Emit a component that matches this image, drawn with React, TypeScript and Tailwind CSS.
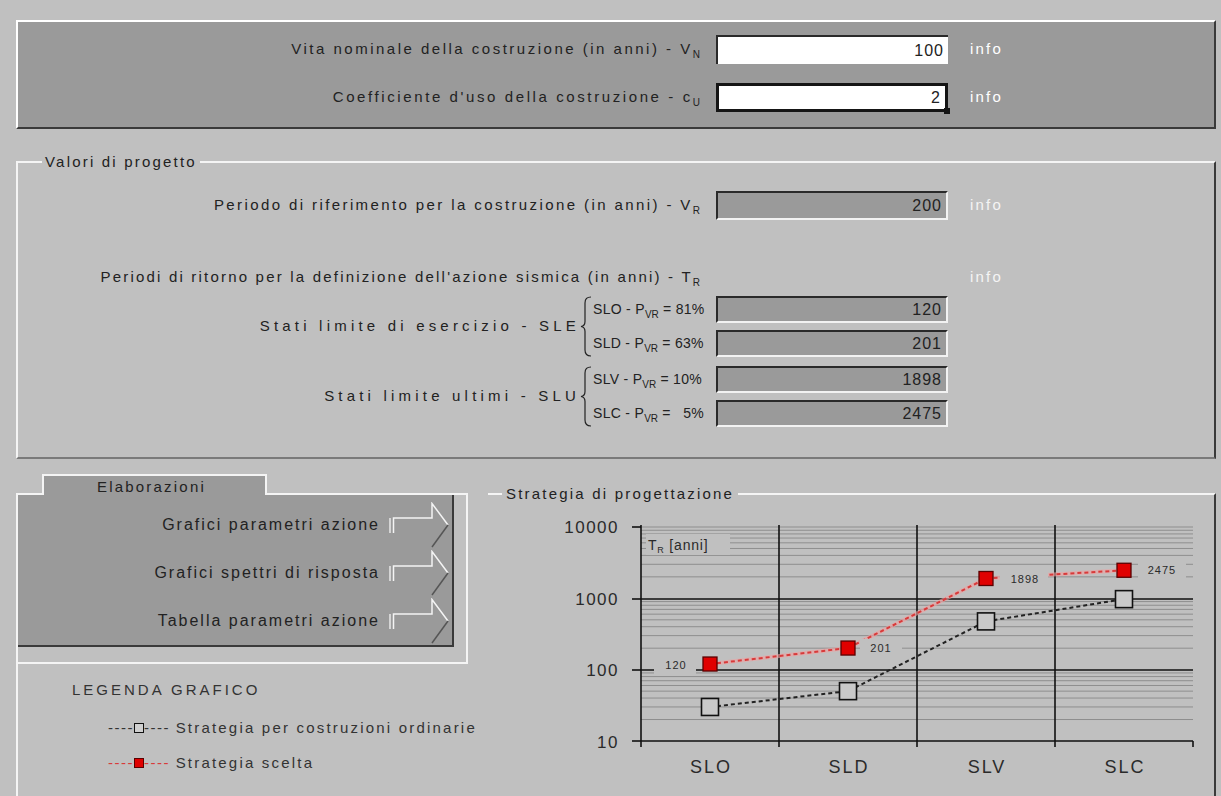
import React from 'react';

const SUNKEN = 'bg-[#9a9a9a] border-t-2 border-l-2 border-t-[#2a2a2a] border-l-[#2a2a2a] border-b-2 border-r-2 border-b-[#f2f2f2] border-r-[#f2f2f2]';

function Sub({ children }: { children: React.ReactNode }) {
  return <span className="align-sub text-[10px] leading-none tracking-normal">{children}</span>;
}

function Field({ value, extra, h = 'h-[29px]', children }: { value: string; extra: string; h?: string; children?: React.ReactNode }) {
  return (
    <div className={`relative shrink-0 ml-[16px] w-[232px] ${h} flex items-center justify-end pr-[4px] text-[16px] tracking-[1px] text-[#222] ${extra}`}>
      {value}
      {children}
    </div>
  );
}

function Arrow() {
  return (
    <svg width="64" height="46" viewBox="0 0 64 46" className="ml-[8px] shrink-0">
      <line x1="2" y1="16" x2="2" y2="31" stroke="#f4f4f4" strokeWidth="1.3" />
      <polyline points="5.5,31 5.5,16 44,16 44,1.5 60,23" fill="none" stroke="#f4f4f4" strokeWidth="1.5" />
      <line x1="60" y1="23" x2="44" y2="45" stroke="#555" strokeWidth="1.5" />
    </svg>
  );
}

function Brace({ h }: { h: number }) {
  const m = h / 2;
  return (
    <svg width="12" height={h} viewBox={`0 0 12 ${h}`} className="shrink-0">
      <path
        d={`M11,1 Q5,1 5,7 L5,${m - 5} Q5,${m - 0.5} 1,${m} Q5,${m + 0.5} 5,${m + 5} L5,${h - 7} Q5,${h - 1} 11,${h - 1}`}
        fill="none"
        stroke="#222"
        strokeWidth="1.2"
      />
    </svg>
  );
}

function SubRow({ code, pct, value }: { code: string; pct: string; value: string }) {
  return (
    <div className="flex items-center h-[27px]">
      <div className="w-[108px] whitespace-pre pl-[1px] text-[14px] tracking-[0.3px]">
        {code} - P<Sub>VR</Sub> = {pct}
      </div>
      <Field value={value} extra={SUNKEN} h="h-[27px]" />
    </div>
  );
}

const yv = (v: number) => 739 - (Math.log10(v) - 1) * 71.33;
const xs = [710, 848, 986, 1124];

function Chart() {
  const minor: number[] = [];
  [10, 100, 1000].forEach((d) => {
    for (let k = 2; k <= 9; k++) minor.push(yv(d * k));
  });
  const ord = [30, 50, 475, 975];
  const sel = [120, 201, 1898, 2475];
  const labels = [
    { t: '120', x: 676, y: 663, bx: 654, bw: 42 },
    { t: '201', x: 881, y: 646, bx: 860, bw: 42 },
    { t: '1898', x: 1025, y: 577, bx: 1000, bw: 48 },
    { t: '2475', x: 1162, y: 568, bx: 1138, bw: 48 },
  ];
  return (
    <svg width="726" height="295" viewBox="0 0 726 295" className="shrink-0">
      <g transform="translate(-488,-501)" fontFamily="'Liberation Sans', Arial, sans-serif">
        {minor.map((y, i) => (
          <line key={i} x1="641" y1={y} x2="1193" y2={y} stroke="#8e8e8e" strokeWidth="1" />
        ))}
        <line x1="641" y1="525" x2="1193" y2="525" stroke="#8e8e8e" strokeWidth="1" />
        <line x1="641" y1="597" x2="1193" y2="597" stroke="#111" strokeWidth="1.6" />
        <line x1="641" y1="668" x2="1193" y2="668" stroke="#111" strokeWidth="1.6" />
        {[779, 917, 1055].map((x) => (
          <line key={x} x1={x} y1="523" x2={x} y2="745" stroke="#111" strokeWidth="1.6" />
        ))}
        <line x1="641" y1="523" x2="641" y2="745" stroke="#111" strokeWidth="1.6" />
        <line x1="641" y1="739" x2="1193" y2="739" stroke="#111" strokeWidth="1.6" />
        <line x1="1193" y1="739" x2="1193" y2="745" stroke="#111" strokeWidth="1.6" />
        {[525, 597, 668, 739].map((y) => (
          <line key={y} x1="632" y1={y} x2="641" y2={y} stroke="#111" strokeWidth="1.6" />
        ))}
        {[
          ['10000', 525],
          ['1000', 597],
          ['100', 668],
          ['10', 740],
        ].map(([t, y]) => (
          <text key={t} x="619" y={Number(y) + 6} textAnchor="end" fontSize="17" letterSpacing="1.5" fill="#2a2a2a">
            {t}
          </text>
        ))}
        {['SLO', 'SLD', 'SLV', 'SLC'].map((t, i) => (
          <text key={t} x={xs[i] + 1} y="771" textAnchor="middle" fontSize="18" letterSpacing="2" fill="#2a2a2a">
            {t}
          </text>
        ))}
        <rect x="646" y="532" width="84" height="21" fill="#c0c0c0" />
        <text x="648" y="548" fontSize="14" letterSpacing="0.8" fill="#2a2a2a">
          T<tspan fontSize="9" dy="3">R</tspan>
          <tspan dy="-3"> [anni]</tspan>
        </text>
        <polyline
          points={xs.map((x, i) => `${x},${yv(ord[i])}`).join(' ')}
          fill="none"
          stroke="#222"
          strokeWidth="2"
          strokeDasharray="4 3"
        />
        <polyline
          points={xs.map((x, i) => `${x},${yv(sel[i])}`).join(' ')}
          fill="none"
          stroke="#f0a0a0"
          strokeWidth="4"
          opacity="0.6"
        />
        <polyline
          points={xs.map((x, i) => `${x},${yv(sel[i])}`).join(' ')}
          fill="none"
          stroke="#d83a3a"
          strokeWidth="2"
          strokeDasharray="4 3"
        />
        {labels.map((l) => (
          <rect key={l.t} x={l.bx} y={l.y - 9} width={l.bw} height="18" fill="#c0c0c0" />
        ))}
        {xs.map((x, i) => (
          <rect key={'o' + i} x={x - 8.5} y={yv(ord[i]) - 8.5} width="17" height="17" fill="#c9c9c9" stroke="#111" strokeWidth="1.6" />
        ))}
        {xs.map((x, i) => (
          <rect key={'s' + i} x={x - 7} y={yv(sel[i]) - 7} width="14" height="14" fill="#e00000" stroke="#5a0000" strokeWidth="1.3" />
        ))}
        {labels.map((l) => (
          <text key={'t' + l.t} x={l.x} y={l.y + 4} textAnchor="middle" fontSize="11" letterSpacing="1" fill="#2a2a2a">
            {l.t}
          </text>
        ))}
      </g>
    </svg>
  );
}

export default function App() {
  return (
    <div className="w-[1221px] h-[796px] overflow-hidden bg-[#c0c0c0] text-[15px] tracking-[2.2px] text-[#222] font-['Liberation_Sans',Arial,sans-serif] flex flex-col">
      {/* pannello dati di input */}
      <div className="shrink-0 ml-[16px] mt-[20px] w-[1200px] h-[109px] bg-[#9a9a9a] border-2 border-t-white border-l-white border-r-[#3a3a3a] border-b-[#3a3a3a] pt-[13px]">
        <div className="flex items-center">
          <div className="w-[682px] shrink-0 text-right tracking-[2.5px]">
            Vita nominale della costruzione (in anni) - V<Sub>N</Sub>
          </div>
          <Field value="100" extra="bg-white border-t-2 border-l-2 border-t-[#2a2a2a] border-l-[#2a2a2a]" />
          <div className="ml-[22px] text-white">info</div>
        </div>
        <div className="flex items-center mt-[19px]">
          <div className="w-[682px] shrink-0 text-right tracking-[2.6px]">
            Coefficiente d'uso della costruzione - c<Sub>U</Sub>
          </div>
          <Field value="2" extra="bg-white border-[3px] border-[#151515]">
            <span className="absolute -right-[5px] -bottom-[5px] w-[6px] h-[6px] bg-[#151515]" />
          </Field>
          <div className="ml-[22px] text-white">info</div>
        </div>
      </div>

      {/* valori di progetto */}
      <div className="shrink-0 ml-[16px] mt-[32px] w-[1200px] h-[298px] border-t-2 border-l-2 border-t-[#f4f4f4] border-l-[#f4f4f4] border-r-2 border-r-[#3a3a3a] border-b-2 border-b-[#7a7a7a]">
        <div className="-mt-[10px] ml-[24px] h-[18px] leading-[18px] w-fit px-[3px] bg-[#c0c0c0]">Valori di progetto</div>
        <div className="flex items-center mt-[20px]">
          <div className="w-[682px] shrink-0 text-right tracking-[2.4px]">
            Periodo di riferimento per la costruzione (in anni) - V<Sub>R</Sub>
          </div>
          <Field value="200" extra={SUNKEN} />
          <div className="ml-[22px] text-[#f4f4f4]">info</div>
        </div>
        <div className="flex items-center h-[29px] mt-[43px]">
          <div className="w-[682px] shrink-0 text-right">
            Periodi di ritorno per la definizione dell'azione sismica (in anni) - T<Sub>R</Sub>
          </div>
          <div className="ml-[270px] text-[#f4f4f4]">info</div>
        </div>
        <div className="flex items-center mt-[4px]">
          <div className="w-[562px] shrink-0 text-right tracking-[4.2px]">Stati limite di esercizio - SLE</div>
          <Brace h={61} />
          <div className="flex flex-col gap-[7px]">
            <SubRow code="SLO" pct="81%" value="120" />
            <SubRow code="SLD" pct="63%" value="201" />
          </div>
        </div>
        <div className="flex items-center mt-[9px]">
          <div className="w-[562px] shrink-0 text-right tracking-[4.2px]">Stati limite ultimi - SLU</div>
          <Brace h={61} />
          <div className="flex flex-col gap-[7px]">
            <SubRow code="SLV" pct="10%" value="1898" />
            <SubRow code="SLC" pct="  5%" value="2475" />
          </div>
        </div>
      </div>

      {/* parte inferiore */}
      <div className="shrink-0 flex items-start mt-[15px] ml-[16px]">
        <div className="w-[464px] shrink-0 flex flex-col">
          <div className="relative z-10 -mb-[2px] ml-[26px] w-[225px] h-[21px] bg-[#9a9a9a] border-t-2 border-x-2 border-[#f4f4f4] pl-[53px] pt-[2px] leading-[17px] text-[15px]">
            Elaborazioni
          </div>
          <div className="w-[452px] h-[171px] border-2 border-[#f4f4f4]">
            <div className="w-[436px] h-[152px] bg-[#9a9a9a] border-r-2 border-b-2 border-[#3a3a3a] pt-[6px] flex flex-col text-[16px] tracking-[2px]">
              {['Grafici parametri azione', 'Grafici spettri di risposta', 'Tabella parametri azione'].map((t) => (
                <div key={t} className="h-[48px] flex items-center justify-end">
                  <span>{t}</span>
                  <Arrow />
                </div>
              ))}
            </div>
          </div>
          <div className="h-[140px] border-l-2 border-[#f4f4f4] pl-[54px] pt-[16px] text-[#333]">
            <div className="h-[20px] leading-[20px] tracking-[3px]">LEGENDA GRAFICO</div>
            <div className="mt-[18px] ml-[36px] h-[20px] flex items-center whitespace-pre">
              <span className="tracking-[1.5px]">----</span>
              <span className="inline-block w-[10px] h-[10px] border border-[#111] bg-[#d0d0d0]" />
              <span className="tracking-[1.5px]">---- </span>
              <span>Strategia per costruzioni ordinarie</span>
            </div>
            <div className="mt-[15px] ml-[36px] h-[20px] flex items-center whitespace-pre">
              <span className="tracking-[1.5px] text-[#d83a3a]">----</span>
              <span className="inline-block w-[10px] h-[10px] border border-[#5a0000] bg-[#e00000]" />
              <span className="tracking-[1.5px] text-[#d83a3a]">---- </span>
              <span>Strategia scelta</span>
            </div>
          </div>
        </div>
        <div className="shrink-0 mt-[19px] ml-[8px] w-[728px] h-[320px] border-t-2 border-t-[#f4f4f4] border-r-2 border-r-[#3a3a3a]">
          <div className="-mt-[10px] ml-[14px] h-[18px] leading-[18px] w-fit px-[4px] bg-[#c0c0c0]">Strategia di progettazione</div>
          <Chart />
        </div>
      </div>
    </div>
  );
}
